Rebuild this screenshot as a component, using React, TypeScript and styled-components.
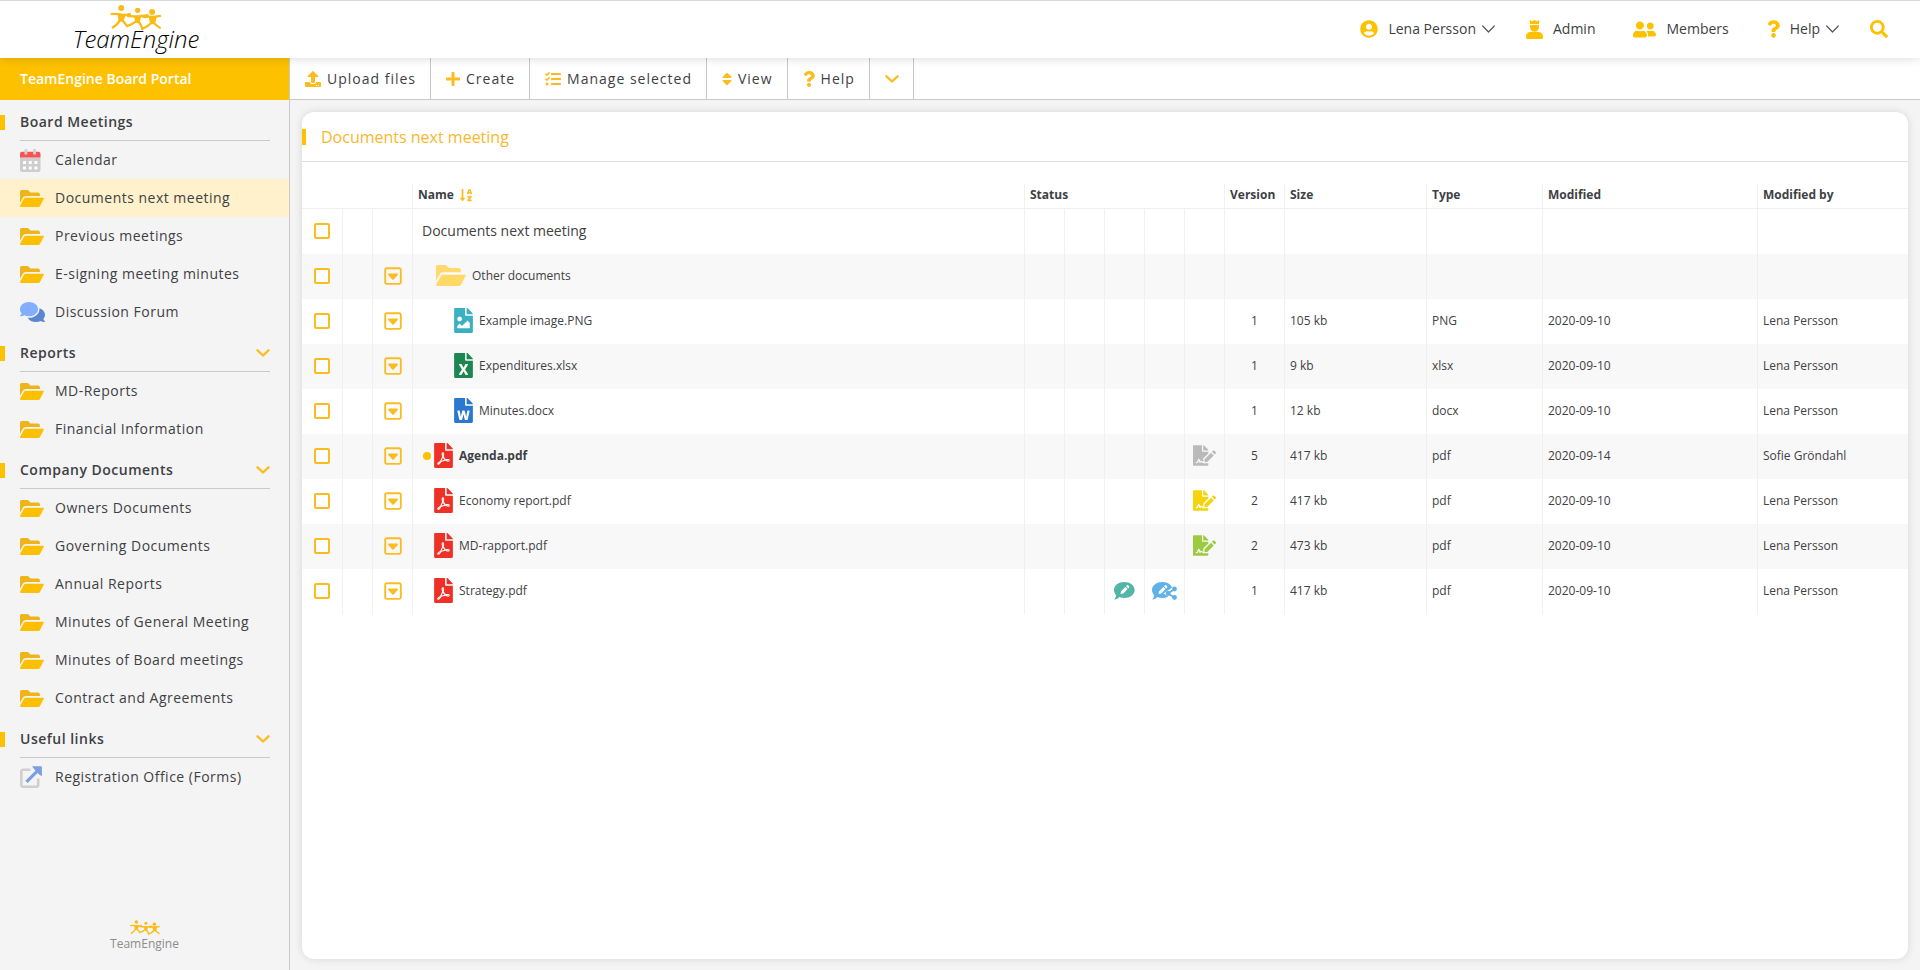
import React from "react";
import styled, { createGlobalStyle, css } from "styled-components";
import {
  FaFileExcel,
  FaFileImage,
  FaFilePdf,
  FaFileSignature,
  FaFileWord,
  FaPlus,
  FaQuestion,
  FaSearch,
  FaSort,
  FaSortAlphaDown,
  FaTasks,
  FaUpload,
  FaUserCircle,
  FaUserFriends,
} from "react-icons/fa";
import { FaRegSquareCaretDown } from "react-icons/fa6";

const color = {
  brand: "#fdc100",
  accent: "#fbbc22",
  text: "#3e4144",
  line: "#c9c9c9",
  cell: "#f0f0f0",
  page: "#f4f4f4",
};

const GlobalStyle = createGlobalStyle`
  * { box-sizing: border-box; }
  body {
    margin: 0;
    background: ${color.page};
    color: ${color.text};
    font-family: "Open Sans", "Noto Sans", sans-serif;
    font-size: 14px;
    line-height: 20px;
  }
  button { font: inherit; color: inherit; background: none; border: 0; margin: 0; padding: 0; cursor: pointer; }
  a { color: inherit; text-decoration: none; }
  svg { display: block; flex: none; }
  h1, h2 { margin: 0; font-size: inherit; font-weight: inherit; }
`;

/* ---------- Page frame ---------- */

const Page = styled.div`
  min-height: 100vh;
  display: flex;
  flex-direction: column;
`;

const Header = styled.header`
  position: relative;
  z-index: 1;
  height: 58px;
  display: flex;
  align-items: center;
  justify-content: space-between;
  padding-right: 32px;
  background: #fff;
  border-top: 1px solid #d9d9d9;
  box-shadow: 0 0 10px rgba(0, 0, 0, 0.16);
`;

const Brand = styled.a`
  width: 272px;
  padding-bottom: 6px;
  display: flex;
  flex-direction: column;
  align-items: center;
  color: #000;
  font-size: 24px;
  font-style: italic;
  font-weight: 300;
  line-height: 18px;
`;

const TopNav = styled.nav`
  display: flex;
  align-items: center;
  gap: 31px;
  padding-bottom: 1px;
`;

const TopItem = styled.button<{ $wide?: boolean }>`
  display: flex;
  align-items: center;
  gap: 10px;
  padding-right: ${(p) => (p.$wide ? "7px" : "0")};
`;

const Glyph = styled.span<{ $w: number }>`
  color: ${color.brand};
  svg { width: ${(p) => p.$w}px; }
`;

const WithArrow = styled.span`
  display: flex;
  align-items: center;
  gap: 6px;
`;

const Body = styled.div`
  flex: 1;
  display: flex;
`;

/* ---------- Sidebar ---------- */

const Sidebar = styled.aside`
  flex: none;
  width: 290px;
  display: flex;
  flex-direction: column;
  border-right: 1px solid ${color.line};
`;

const PortalName = styled.h1`
  height: 42px;
  padding: 0 20px;
  display: flex;
  align-items: center;
  background: ${color.brand};
  color: #fff;
  font-weight: 600;
`;

const SectionHead = styled.div`
  height: 41px;
  padding-right: 19px;
  display: flex;
  align-items: stretch;
  gap: 15px;
  &::before {
    content: "";
    width: 5px;
    height: 15px;
    margin-top: 15px;
    background: ${color.brand};
  }
`;

const SectionTitle = styled.h2`
  flex: 1;
  display: flex;
  align-items: center;
  justify-content: space-between;
  padding-top: 3px;
  border-bottom: 1px solid ${color.line};
  font-weight: 600;
  letter-spacing: 0.035em;
`;

const NavLink = styled.a<{ $active?: boolean }>`
  height: 38px;
  padding: 0 20px;
  display: flex;
  align-items: center;
  letter-spacing: 0.035em;
  background: ${(p) => (p.$active ? "#fff1cb" : "none")};
`;

const NavIcon = styled.span`
  width: 35px;
`;

const SideFooter = styled.div`
  margin-top: auto;
  padding-bottom: 17px;
  display: flex;
  flex-direction: column;
  align-items: center;
  color: #8c8c8c;
  font-size: 12px;
  line-height: 18px;
`;

/* ---------- Main column ---------- */

const Main = styled.main`
  flex: 1;
  min-width: 0;
  display: flex;
  flex-direction: column;
`;

const Toolbar = styled.div`
  height: 42px;
  display: flex;
  background: #fff;
  border-bottom: 1px solid ${color.line};
`;

const Tool = styled.button`
  display: flex;
  align-items: center;
  gap: 6px;
  padding: 0 14px 0 15px;
  border-right: 1px solid ${color.line};
  letter-spacing: 1px;
  ${Glyph} { color: ${color.accent}; }
`;

const Card = styled.section`
  flex: 1;
  margin: 12px 12px 11px;
  background: #fff;
  border-radius: 12px;
  box-shadow: 0 0 8px rgba(0, 0, 0, 0.12);
`;

const CardTitle = styled.h2`
  height: 50px;
  display: flex;
  align-items: center;
  gap: 15px;
  border-bottom: 1px solid #dedede;
  color: #f9b82c;
  font-size: 16px;
  &::before {
    content: "";
    width: 4px;
    height: 16px;
    background: ${color.brand};
  }
`;

/* ---------- Document table ---------- */

const Table = styled.table`
  width: 100%;
  margin-top: 22px;
  table-layout: fixed;
  border-collapse: separate;
  border-spacing: 0;
  font-size: 12px;
  line-height: 18px;
`;

const Col = styled.col<{ $w?: number }>`
  ${(p) => p.$w && css`width: ${p.$w}px;`}
`;

const HeadCell = styled.th<{ $plain?: boolean }>`
  height: 25px;
  padding: 0 0 3px 5px;
  text-align: left;
  font-weight: 700;
  white-space: nowrap;
  border-bottom: 1px solid ${color.cell};
  border-left: ${(p) => (p.$plain ? "0" : `1px solid ${color.cell}`)};
`;

const SortLabel = styled.button`
  display: flex;
  align-items: center;
  gap: 5px;
  line-height: 18px;
  svg { color: ${color.accent}; }
`;

const Row = styled.tr`
  &:nth-child(even) { background: #f8f8f8; }
`;

const Cell = styled.td<{ $center?: boolean; $first?: boolean }>`
  height: 45px;
  padding: 0 0 2px ${(p) => (p.$center ? "0" : "5px")};
  text-align: ${(p) => (p.$center ? "center" : "left")};
  border-left: ${(p) => (p.$first ? "0" : `1px solid ${color.cell}`)};
  svg { margin: 0 auto; }
`;

const Tick = styled.input`
  appearance: none;
  display: block;
  width: 16px;
  height: 16px;
  margin: 1px auto 0;
  background: #fff;
  border: 2px solid ${color.accent};
  border-radius: 2px;
`;

const RowMenu = styled.button`
  display: block;
  margin: 0 auto;
  color: ${color.accent};
`;

const indents = { root: "4px", pdf: "16px", folder: "18px", file: "36px" };

const NameLink = styled.a<{ $indent: keyof typeof indents; $bold?: boolean }>`
  display: flex;
  align-items: center;
  gap: 6px;
  position: relative;
  padding-left: ${(p) => indents[p.$indent]};
  font-size: ${(p) => (p.$indent === "root" ? "14px" : "12px")};
  font-weight: ${(p) => (p.$bold ? 700 : 400)};
  svg { margin: 0; }
`;

const FileIcon = styled.span`
  height: 25px;
  display: flex;
  align-items: center;
  > svg[viewBox="0 0 384 512"] { width: 19px; }
`;

const UnreadDot = styled.span`
  position: absolute;
  left: 5px;
  width: 8px;
  height: 8px;
  border-radius: 50%;
  background: ${color.brand};
`;

/* ---------- Drawings ---------- */

function Figures({ width, height }: { width: number; height: number }) {
  return (
    <svg width={width} height={height} viewBox="0 0 156 76" fill="none" stroke="#f9bb17" strokeWidth="7" strokeLinejoin="round" aria-hidden="true">
      <g fill="#f9bb17" stroke="none">
        <circle cx="33" cy="9" r="9" />
        <circle cx="83" cy="16" r="8" />
        <circle cx="127" cy="21" r="9" />
        <path d="M22 27 L48 28 L39 50 L25 50 Z" />
        <path d="M72 33 L94 34 L88 56 L76 54 Z" />
        <path d="M116 34 L141 34 L136 58 L121 58 Z" />
      </g>
      <path d="M1 28 Q20 25 33 29 Q44 32 62 27" />
      <path d="M29 46 Q22 60 5 70 M35 46 Q44 54 51 64 Q66 60 78 50" />
      <path d="M50 33 Q68 35 84 35 Q100 33 116 31" />
      <path d="M86 50 Q94 60 97 73 Q114 66 125 54" />
      <path d="M98 37 Q116 34 128 36 Q142 34 154 33" />
      <path d="M131 54 Q142 64 153 71" />
    </svg>
  );
}

function Folder({ size = 24, soft = false }: { size?: number; soft?: boolean }) {
  return (
    <svg width={size} height={Math.round(size * 0.7)} viewBox="0 0 576 400" preserveAspectRatio="none" aria-hidden="true">
      <path fill={soft ? "#ffd96e" : "#edb41b"} d="M40 0h150l62 58h180c26 0 46 20 46 46v36H146c-34 0-62 17-78 44L0 300V40C0 18 18 0 40 0z" />
      <path fill={soft ? "#ffd866" : "#fdc000"} d="M570 206 L480 378c-7 13-20 22-36 22H24c-18 0-29-18-20-34l92-158c8-15 22-24 40-24h420c17 0 24 12 14 22z" />
    </svg>
  );
}

function CalendarIcon() {
  return (
    <svg width="21" height="23" viewBox="0 0 21 23" aria-hidden="true">
      <path fill="#cdcdcd" d="M0 8.500h20.500V21a2 2 0 0 1-2 2h-16.500a2 2 0 0 1-2-2z" />
      <path fill="#f95252" d="M2 2.800h16.500a2 2 0 0 1 2 2V8.500H0V4.800a2 2 0 0 1 2-2z" />
      <path fill="#d2d2d2" d="M4.500 0h2.800v5.500H4.500zM13.200 0H16v5.500h-2.800z" />
      <path fill="#fff" d="M3 12h3v3H3zM8.700 12h3v3h-3zM14.400 12h3v3h-3zM3 17.500h3v3H3zM8.700 17.500h3v3h-3zM14.400 17.500h3v3h-3z" />
    </svg>
  );
}

function ForumIcon() {
  return (
    <svg width="25" height="20" viewBox="0 32 576 448" preserveAspectRatio="none" aria-hidden="true">
      <path fill="#83adff" d="M416 192c0-88.400-93.100-160-208-160S0 103.600 0 192c0 34.300 14.100 65.900 38 92-13.400 30.200-35.500 54.200-35.800 54.500-2.200 2.300-2.800 5.700-1.500 8.700S4.800 352 8 352c36.600 0 66.900-12.300 88.700-25 32.200 15.700 70.300 25 111.300 25 114.900 0 208-71.600 208-160z" />
      <path fill="#5a86d2" d="M538 412c23.900-26 38-57.700 38-92 0-66.900-53.500-124.200-129.300-148.100.9 6.600 1.300 13.300 1.300 20.100 0 105.900-107.700 192-240 192-10.800 0-21.300-.8-31.700-1.900C207.800 439.600 281.800 480 368 480c41 0 79.100-9.200 111.300-25 21.800 12.700 52.100 25 88.700 25 3.200 0 6.100-1.900 7.300-4.800 1.300-2.900.7-6.300-1.500-8.700-.3-.3-22.400-24.200-35.800-54.500z" />
    </svg>
  );
}

function ExternalIcon() {
  return (
    <svg width="22" height="22" viewBox="0 0 22 22" fill="none" aria-hidden="true">
      <path stroke="#cfcfcf" strokeWidth="2.600" d="M10.500 3.800H3a1.700 1.700 0 0 0-1.700 1.700V19A1.700 1.700 0 0 0 3 20.700h13.500a1.700 1.700 0 0 0 1.700-1.700v-6.500" />
      <path stroke="#7b9fe0" strokeWidth="3.200" d="M6.500 15.800 19 3.300" />
      <path fill="#7b9fe0" d="M12 .3h9.200c.4 0 .7.300.7.700v9.200l-3-2L14 3z" />
    </svg>
  );
}

function AdminIcon() {
  return (
    <svg width="17" height="19" viewBox="0 0 17 19" fill="currentColor" aria-hidden="true">
      <path d="M3.500 0 6 1.300 8.500 0 11 1.300 13.500 0 12.900 4H4.100z" />
      <path d="M4 5h9v2.300a4.500 4.500 0 0 1-9 0z" />
      <path d="M4.500 12h8a4.500 4.500 0 0 1 4.500 4.500V17.500a1.500 1.500 0 0 1-1.500 1.500h-14A1.500 1.500 0 0 1 0 17.500v-1A4.500 4.500 0 0 1 4.500 12z" />
    </svg>
  );
}

function Chevron({ thin = false, width = 14 }: { thin?: boolean; width?: number }) {
  return (
    <svg width={width} height="8" viewBox={`0 0 ${width} 8`} fill="none" stroke={thin ? "#555" : color.accent} strokeWidth={thin ? 1.2 : 2.4} strokeLinecap="round" strokeLinejoin="round" aria-hidden="true">
      <path d={thin ? `M.7 1 L${width / 2} 7 L${width - 0.7} 1` : `M1.500 1.300 L${width / 2} 6.500 L${width - 1.5} 1.300`} />
    </svg>
  );
}

function CommentPencil({ shared = false }: { shared?: boolean }) {
  const fill = shared ? "#5fb1e8" : "#52b5a6";
  return (
    <svg width={shared ? 25 : 21} height="18" viewBox={shared ? "0 0 25 18" : "0 0 21 18"} aria-hidden="true">
      <path fill={fill} d="M10.300 0C16 0 20.600 3.500 20.600 8s-4.600 8-10.300 8c-1.800 0-3.500-.4-5-1C4.300 16.200 2.500 17.500.3 17.500c1-1.200 1.600-2.800 1.800-4.300C.8 11.800 0 10 0 8c0-4.500 4.600-8 10.300-8z" />
      <path fill="#fff" d="m6.500 12 .6-2.800 4.300-4.300 2.200 2.200-4.300 4.300zM12.100 4.200l.9-.9c.3-.3.800-.3 1.100 0l1.100 1.100c.3.300.3.800 0 1.100l-.9.900z" />
      {shared && (
        <>
          <path d="m22.500 7-6.500 4.500 6.500 4" fill="none" stroke="#fff" strokeWidth="5" strokeLinecap="round" />
          <path d="m22.500 7-6.500 4.500 6.500 4" fill="none" stroke={fill} strokeWidth="1.800" />
          <g fill={fill}>
            <circle cx="22.500" cy="7" r="2.400" />
            <circle cx="16" cy="11.500" r="2.400" />
            <circle cx="22.500" cy="15.500" r="2.400" />
          </g>
        </>
      )}
    </svg>
  );
}

/* ---------- Data ---------- */

type NavIconKind = "folder" | "calendar" | "forum" | "external";

const navIcons: Record<NavIconKind, React.ReactNode> = {
  folder: <Folder />,
  calendar: <CalendarIcon />,
  forum: <ForumIcon />,
  external: <ExternalIcon />,
};

const sections: { title: string; fixed?: boolean; items: [string, NavIconKind?][] }[] = [
  {
    title: "Board Meetings",
    fixed: true,
    items: [
      ["Calendar", "calendar"],
      ["Documents next meeting"],
      ["Previous meetings"],
      ["E-signing meeting minutes"],
      ["Discussion Forum", "forum"],
    ],
  },
  { title: "Reports", items: [["MD-Reports"], ["Financial Information"]] },
  {
    title: "Company Documents",
    items: [
      ["Owners Documents"],
      ["Governing Documents"],
      ["Annual Reports"],
      ["Minutes of General Meeting"],
      ["Minutes of Board meetings"],
      ["Contract and Agreements"],
    ],
  },
  { title: "Useful links", items: [["Registration Office (Forms)", "external"]] },
];

const CURRENT = "Documents next meeting";

const tools: { label: string; icon: React.ReactNode; width: number }[] = [
  { label: "Upload files", icon: <FaUpload size={16} />, width: 16 },
  { label: "Create", icon: <FaPlus size={16} />, width: 14 },
  { label: "Manage selected", icon: <FaTasks size={16} />, width: 16 },
  { label: "View", icon: <FaSort size={16} />, width: 10 },
  { label: "Help", icon: <FaQuestion size={16} />, width: 12 },
];

type Doc = {
  name: string;
  indent: keyof typeof indents;
  icon?: React.ReactNode;
  unread?: boolean;
  status?: Record<number, React.ReactNode>;
  meta?: [string, string, string, string, string];
};

const pdfIcon = <FaFilePdf size={25} color="#ee3026" />;

const docs: Doc[] = [
  { name: "Documents next meeting", indent: "root" },
  { name: "Other documents", indent: "folder", icon: <Folder size={30} soft /> },
  { name: "Example image.PNG", indent: "file", icon: <FaFileImage size={25} color="#3ab0c3" />, meta: ["1", "105 kb", "PNG", "2020-09-10", "Lena Persson"] },
  { name: "Expenditures.xlsx", indent: "file", icon: <FaFileExcel size={25} color="#1c8750" />, meta: ["1", "9 kb", "xlsx", "2020-09-10", "Lena Persson"] },
  { name: "Minutes.docx", indent: "file", icon: <FaFileWord size={25} color="#2b78d0" />, meta: ["1", "12 kb", "docx", "2020-09-10", "Lena Persson"] },
  { name: "Agenda.pdf", indent: "pdf", icon: pdfIcon, unread: true, status: { 4: <FaFileSignature size={23} color="#bababa" /> }, meta: ["5", "417 kb", "pdf", "2020-09-14", "Sofie Gröndahl"] },
  { name: "Economy report.pdf", indent: "pdf", icon: pdfIcon, status: { 4: <FaFileSignature size={23} color="#f6d30b" /> }, meta: ["2", "417 kb", "pdf", "2020-09-10", "Lena Persson"] },
  { name: "MD-rapport.pdf", indent: "pdf", icon: pdfIcon, status: { 4: <FaFileSignature size={23} color="#9ccb3f" /> }, meta: ["2", "473 kb", "pdf", "2020-09-10", "Lena Persson"] },
  { name: "Strategy.pdf", indent: "pdf", icon: pdfIcon, status: { 2: <CommentPencil />, 3: <CommentPencil shared /> }, meta: ["1", "417 kb", "pdf", "2020-09-10", "Lena Persson"] },
];

const columnWidths = [40, 30, 40, undefined, 40, 40, 40, 40, 40, 60, 142, 116, 215, 151];

/* ---------- Components ---------- */

function DocRow({ doc }: { doc: Doc }) {
  const meta = doc.meta ?? ["", "", "", "", ""];
  return (
    <Row>
      <Cell $center $first>
        <Tick type="checkbox" aria-label={`Select ${doc.name}`} />
      </Cell>
      <Cell />
      <Cell $center>
        {doc.indent !== "root" && (
          <RowMenu type="button" aria-label={`Actions for ${doc.name}`}>
            <FaRegSquareCaretDown size={20} />
          </RowMenu>
        )}
      </Cell>
      <Cell>
        <NameLink href="#" $indent={doc.indent} $bold={doc.unread}>
          {doc.unread && <UnreadDot />}
          {doc.icon && <FileIcon>{doc.icon}</FileIcon>}
          {doc.name}
        </NameLink>
      </Cell>
      {[0, 1, 2, 3, 4].map((i) => (
        <Cell key={i} $center>{doc.status?.[i]}</Cell>
      ))}
      <Cell $center>{meta[0]}</Cell>
      <Cell>{meta[1]}</Cell>
      <Cell>{meta[2]}</Cell>
      <Cell>{meta[3]}</Cell>
      <Cell>{meta[4]}</Cell>
    </Row>
  );
}

export default function App() {
  return (
    <Page>
      <GlobalStyle />
      <Header>
        <Brand href="#">
          <Figures width={52} height={25} />
          TeamEngine
        </Brand>
        <TopNav>
          <TopItem type="button">
            <Glyph $w={18}><FaUserCircle size={18} /></Glyph>
            <WithArrow>Lena Persson <Chevron thin width={13} /></WithArrow>
          </TopItem>
          <TopItem type="button" $wide>
            <Glyph $w={17}><AdminIcon /></Glyph>
            Admin
          </TopItem>
          <TopItem type="button" $wide>
            <Glyph $w={23}><FaUserFriends size={19} /></Glyph>
            Members
          </TopItem>
          <TopItem type="button">
            <Glyph $w={13}><FaQuestion size={18} /></Glyph>
            <WithArrow>Help <Chevron thin width={13} /></WithArrow>
          </TopItem>
          <TopItem type="button" aria-label="Search">
            <Glyph $w={18}><FaSearch size={18} /></Glyph>
          </TopItem>
        </TopNav>
      </Header>
      <Body>
        <Sidebar>
          <PortalName>TeamEngine Board Portal</PortalName>
          <nav>
            {sections.map((section) => (
              <section key={section.title}>
                <SectionHead>
                  <SectionTitle>
                    {section.title}
                    {!section.fixed && (
                      <button type="button" aria-label={`Collapse ${section.title}`}>
                        <Chevron />
                      </button>
                    )}
                  </SectionTitle>
                </SectionHead>
                {section.items.map(([label, icon = "folder"]) => (
                  <NavLink key={label} href="#" $active={label === CURRENT}>
                    <NavIcon>{navIcons[icon]}</NavIcon>
                    {label}
                  </NavLink>
                ))}
              </section>
            ))}
          </nav>
          <SideFooter>
            <Figures width={30} height={15} />
            TeamEngine
          </SideFooter>
        </Sidebar>
        <Main>
          <Toolbar>
            {tools.map((tool) => (
              <Tool key={tool.label} type="button">
                <Glyph $w={tool.width}>{tool.icon}</Glyph>
                {tool.label}
              </Tool>
            ))}
            <Tool type="button" aria-label="More"><Chevron /></Tool>
          </Toolbar>
          <Card>
            <CardTitle>Documents next meeting</CardTitle>
            <Table>
              <colgroup>
                {columnWidths.map((w, i) => <Col key={i} $w={w} />)}
              </colgroup>
              <thead>
                <tr>
                  <HeadCell $plain colSpan={3} />
                  <HeadCell>
                    <SortLabel type="button">Name <FaSortAlphaDown size={14} /></SortLabel>
                  </HeadCell>
                  <HeadCell colSpan={5}>Status</HeadCell>
                  <HeadCell>Version</HeadCell>
                  <HeadCell>Size</HeadCell>
                  <HeadCell>Type</HeadCell>
                  <HeadCell>Modified</HeadCell>
                  <HeadCell>Modified by</HeadCell>
                </tr>
              </thead>
              <tbody>
                {docs.map((doc) => <DocRow key={doc.name} doc={doc} />)}
              </tbody>
            </Table>
          </Card>
        </Main>
      </Body>
    </Page>
  );
}
